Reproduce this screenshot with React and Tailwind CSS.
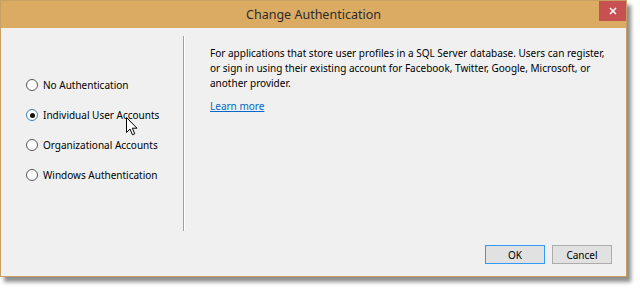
import React from 'react';

const options = [
  { label: 'No Authentication', checked: false },
  { label: 'Individual User Accounts', checked: true },
  { label: 'Organizational Accounts', checked: false },
  { label: 'Windows Authentication', checked: false },
];

const Radio = ({ checked }) => (
  <span
    className={`w-[12px] h-[12px] rounded-full border bg-white flex items-center justify-center shrink-0 ${
      checked ? 'border-[#3c7fb1]' : 'border-[#555]'
    }`}
  >
    {checked && <span className="w-[5px] h-[5px] rounded-full bg-[#111]" />}
  </span>
);

const Cursor = () => (
  <svg className="absolute left-[126px] top-[117px]" width="12" height="19" viewBox="0 0 12 19">
    <path d="M0.5 0.5 L0.5 15.5 L4 12 L6.5 17.8 L8.8 16.8 L6.3 11.2 L11 11.2 Z" fill="#fff" stroke="#000" strokeWidth="1" strokeLinejoin="miter" />
  </svg>
);

export default function App() {
  return (
    <div className="w-[640px] h-[291px] bg-white relative" style={{ fontFamily: '"Segoe UI", "Noto Sans", sans-serif' }}>
      <div className="w-[627px] h-[277px] flex flex-col border border-[#c9a063] bg-[#f0f0f0] shadow-[4px_5px_4px_rgba(0,0,0,0.45)]">
        {/* title bar */}
        <div className="h-[27px] bg-[#dcab63] flex items-start relative shrink-0">
          <div className="flex-1 text-center text-[12.5px] leading-[27px] text-[#2b2b2b]">Change Authentication</div>
          <div className="absolute right-0 top-0 w-[27px] h-[20px] bg-[#c75050] flex items-center justify-center">
            <svg width="8" height="8" viewBox="0 0 8 8">
              <path d="M1 1 L7 7 M7 1 L1 7" stroke="#fff" strokeWidth="1.6" />
            </svg>
          </div>
        </div>

        {/* body */}
        <div className="flex-1 flex flex-col">
          <div className="flex mt-[8px]">
            <div className="w-[182px] pt-[34px] pl-[25px] flex flex-col">
              {options.map(o => (
                <div key={o.label} className="h-[30px] flex items-center gap-[5px] text-[10px] text-black">
                  <Radio checked={o.checked} />
                  <span>{o.label}</span>
                </div>
              ))}
            </div>
            <div className="w-[2px] h-[195px] flex">
              <div className="w-[1px] bg-[#a0a0a0]" />
              <div className="w-[1px] bg-white" />
            </div>
            <div className="flex-1 pl-[25px] pt-[10px] text-[10px] leading-[15px] text-black">
              <p>
                For applications that store user profiles in a SQL Server database. Users can register,
                <br />
                or sign in using their existing account for Facebook, Twitter, Google, Microsoft, or
                <br />
                another provider.
              </p>
              <a className="block mt-[8px] text-[#0066cc] underline">Learn more</a>
            </div>
          </div>
          <div className="flex-1 flex items-end justify-end gap-[7px] pr-[14px] pb-[12px]">
            <button className="w-[60px] h-[19px] border border-[#3399ff] bg-[#e1e1e1] text-[10px] leading-none text-black">OK</button>
            <button className="w-[60px] h-[19px] border border-[#adadad] bg-[#e1e1e1] text-[10px] leading-none text-black">Cancel</button>
          </div>
        </div>
      </div>
      <Cursor />
    </div>
  );
}
